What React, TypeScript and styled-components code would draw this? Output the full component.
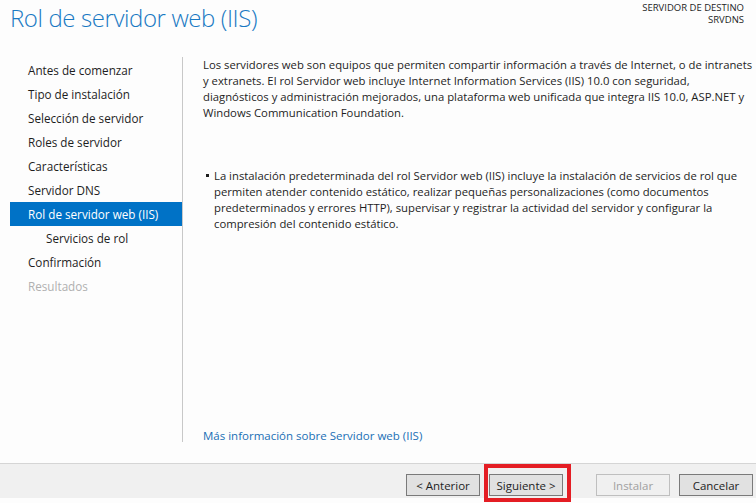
import styled, { createGlobalStyle } from 'styled-components';

const GlobalStyle = createGlobalStyle`
	html, body {
		margin: 0;
		padding: 0;
		background: #fdfdfd;
	}
	body {
		font-family: 'Open Sans', 'Noto Sans', sans-serif;
		color: #1e1e1e;
	}
`;

const Window = styled.div`
	width: 756px;
	height: 503px;
	display: flex;
	flex-direction: column;
	background: #fdfdfd;
	overflow: hidden;
`;

const Header = styled.div`
	height: 57px;
	display: flex;
	justify-content: space-between;
	align-items: flex-start;
	flex-shrink: 0;
`;

const Title = styled.h1`
	margin: 1px 0 0 10px;
	font-size: 24px;
	font-weight: 300;
	color: #1979c3;
	letter-spacing: -0.4px;
	line-height: 34px;
`;

const Target = styled.div`
	margin: 2px 12px 0 0;
	font-size: 9.5px;
	line-height: 12px;
	text-align: right;
	text-transform: uppercase;
`;

const Body = styled.div`
	height: 406px;
	display: flex;
	flex-shrink: 0;
`;

const Nav = styled.ul`
	list-style: none;
	width: 172px;
	margin: 1px 0 0 10px;
	padding: 0;
`;

const NavItem = styled.li<{ $active?: boolean; $sub?: boolean; $disabled?: boolean }>`
	height: 24px;
	line-height: 24px;
	font-size: 11.7px;
	padding-left: ${(p) => (p.$sub ? 36 : 18)}px;
	background: ${(p) => (p.$active ? '#0072c6' : 'transparent')};
	color: ${(p) => (p.$active ? '#ffffff' : p.$disabled ? '#b0b0b0' : '#1e1e1e')};
	white-space: nowrap;
`;

const Content = styled.div`
	width: 553px;
	height: 385px;
	border-left: 1px solid #c8c8c8;
	padding-left: 20px;
	display: flex;
	flex-direction: column;
`;

const Paragraph = styled.p`
	margin: 0;
	font-size: 11.3px;
	line-height: 16px;
	white-space: nowrap;
`;

const Bullets = styled.ul`
	margin: 47px 0 0 0;
	padding: 0 0 0 11px;
	list-style: none;
`;

const Bullet = styled.li`
	position: relative;
	font-size: 11.3px;
	line-height: 16px;
	white-space: nowrap;

	&::before {
		content: '';
		position: absolute;
		left: -8px;
		top: 6px;
		width: 3px;
		height: 3px;
		background: #1e1e1e;
	}
`;

const MoreLink = styled.a`
	margin-top: auto;
	margin-bottom: -2px;
	font-size: 11.5px;
	line-height: 16px;
	color: #1a6fb5;
	text-decoration: none;
	cursor: pointer;
`;

const Footer = styled.div`
	height: 34px;
	border-top: 1px solid #d5d5d5;
	background: #f0f0f0;
	display: flex;
	justify-content: flex-end;
	align-items: flex-end;
	padding-right: 3px;
	flex-shrink: 0;
`;

const ButtonGroup = styled.div<{ $gap: number }>`
	display: flex;
	gap: ${(p) => p.$gap}px;
	margin-left: 33px;
	margin-bottom: 2px;
`;

const Button = styled.button<{ $disabled?: boolean }>`
	position: relative;
	width: 74px;
	height: 22px;
	padding: 0;
	font-family: 'Open Sans', 'Noto Sans', sans-serif;
	font-size: 11.5px;
	color: ${(p) => (p.$disabled ? '#a0a0a0' : '#1e1e1e')};
	background: ${(p) => (p.$disabled ? '#f0f0f0' : '#e1e1e1')};
	border: 1px solid ${(p) => (p.$disabled ? '#bfbfbf' : '#7a7a7a')};
	cursor: pointer;
`;

const Highlight = styled.span`
	position: absolute;
	left: -6px;
	right: -9px;
	top: -11px;
	bottom: -7px;
	border: 4px solid #e41d24;
	pointer-events: none;
`;

const App = () => {
	return (
		<>
			<GlobalStyle />
			<Window>
				<Header>
					<Title>Rol de servidor web (IIS)</Title>
					<Target>
						Servidor de destino
						<br />
						SRVDNS
					</Target>
				</Header>
				<Body>
					<Nav>
						<NavItem>Antes de comenzar</NavItem>
						<NavItem>Tipo de instalación</NavItem>
						<NavItem>Selección de servidor</NavItem>
						<NavItem>Roles de servidor</NavItem>
						<NavItem>Características</NavItem>
						<NavItem>Servidor DNS</NavItem>
						<NavItem $active>Rol de servidor web (IIS)</NavItem>
						<NavItem $sub>Servicios de rol</NavItem>
						<NavItem>Confirmación</NavItem>
						<NavItem $disabled>Resultados</NavItem>
					</Nav>
					<Content>
						<Paragraph>
							Los servidores web son equipos que permiten compartir información a través de Internet, o de intranets
							<br />
							y extranets. El rol Servidor web incluye Internet Information Services (IIS) 10.0 con seguridad,
							<br />
							diagnósticos y administración mejorados, una plataforma web unificada que integra IIS 10.0, ASP.NET y
							<br />
							Windows Communication Foundation.
						</Paragraph>
						<Bullets>
							<Bullet>
								La instalación predeterminada del rol Servidor web (IIS) incluye la instalación de servicios de rol que
								<br />
								permiten atender contenido estático, realizar pequeñas personalizaciones (como documentos
								<br />
								predeterminados y errores HTTP), supervisar y registrar la actividad del servidor y configurar la
								<br />
								compresión del contenido estático.
							</Bullet>
						</Bullets>
						<MoreLink>Más información sobre Servidor web (IIS)</MoreLink>
					</Content>
				</Body>
				<Footer>
					<ButtonGroup $gap={9}>
						<Button>&lt; Anterior</Button>
						<Button>
							Siguiente &gt;
							<Highlight />
						</Button>
					</ButtonGroup>
					<ButtonGroup $gap={9}>
						<Button $disabled>Instalar</Button>
						<Button>Cancelar</Button>
					</ButtonGroup>
				</Footer>
			</Window>
		</>
	);
};

export default App;
